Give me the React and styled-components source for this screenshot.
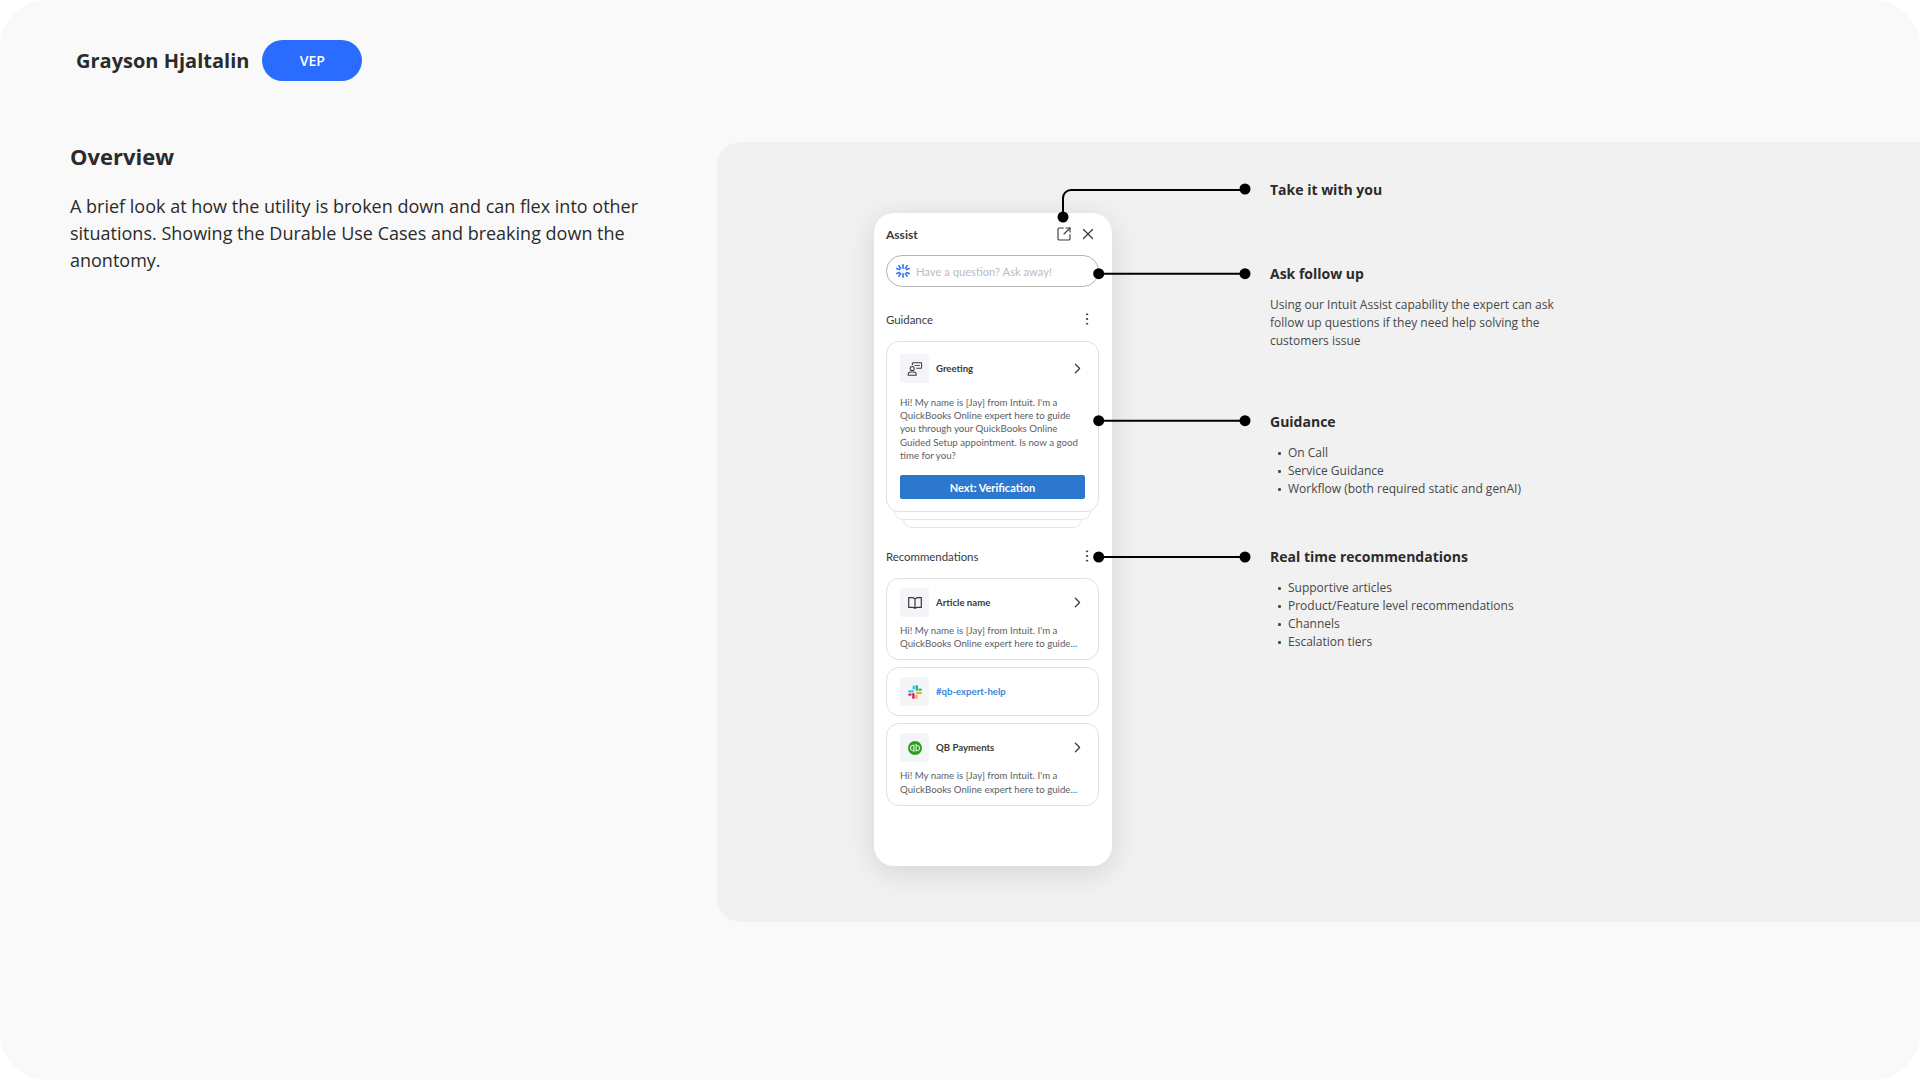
import styled, { createGlobalStyle } from "styled-components";
import { ChevronRight, EllipsisVertical, SquareArrowOutUpRight, X } from "lucide-react";

const GlobalStyle = createGlobalStyle`
  html, body {
    margin: 0;
    padding: 0;
    background-color: #ffffff;
  }
  * {
    box-sizing: border-box;
  }
`;

const Page = styled.div`
  position: relative;
  width: 1920px;
  height: 1080px;
  overflow: hidden;
  background-color: #f9f9f9;
  border-radius: 48px;
  font-family: "Open Sans", sans-serif;
  color: #2b2b2b;
`;

const Header = styled.div`
  display: flex;
  align-items: center;
  gap: 13px;
  height: 41px;
  padding-left: 76px;
  position: absolute;
  top: 40px;
  left: 0;
`;

const Name = styled.h1`
  margin: 0;
  font-size: 20px;
  font-weight: 700;
  line-height: 41px;
`;

const Badge = styled.div`
  display: flex;
  align-items: center;
  justify-content: center;
  width: 100px;
  height: 41px;
  border-radius: 21px;
  background-color: #2a6cff;
  color: white;
  font-size: 14px;
  font-weight: 600;
`;

const Main = styled.div`
  display: flex;
  padding-top: 142px;
`;

const Intro = styled.section`
  width: 717px;
  padding-left: 70px;
`;

const IntroTitle = styled.h2`
  margin: 0 0 22px;
  font-size: 22px;
  font-weight: 700;
  line-height: 29px;
`;

const IntroText = styled.p`
  margin: 0;
  width: 590px;
  font-size: 18px;
  line-height: 27px;
`;

const Panel = styled.section`
  position: relative;
  display: flex;
  align-items: flex-start;
  gap: 158px;
  width: 1203px;
  height: 780px;
  padding-left: 157px;
  background-color: #f1f1f1;
  border-radius: 24px 0 0 24px;
`;

const Phone = styled.div`
  display: flex;
  flex-direction: column;
  flex: none;
  width: 238px;
  height: 653px;
  margin-top: 71px;
  padding: 0 13px 0 12px;
  background-color: white;
  border-radius: 20px;
  box-shadow: 0 6px 30px rgba(0, 0, 0, 0.12);
  font-family: Lato, sans-serif;
  color: #393a3d;
`;

const PhoneHeader = styled.div`
  display: flex;
  align-items: center;
  justify-content: space-between;
  height: 42px;
`;

const PhoneTitle = styled.div`
  font-size: 12px;
  font-weight: 700;
  color: #393a3d;
`;

const HeaderIcons = styled.div`
  display: flex;
  align-items: center;
  gap: 7px;
  padding-right: 2px;
  color: #393a3d;
`;

const AskBox = styled.div`
  display: flex;
  align-items: center;
  gap: 6px;
  height: 32px;
  padding-left: 9px;
  border: 1px solid #b4b4b4;
  border-radius: 16px;
  font-size: 11.2px;
  color: #b9bcc2;
`;

const SectionRow = styled.div`
  display: flex;
  align-items: center;
  justify-content: space-between;
  height: 20px;
  margin-top: ${(p) => p.$top}px;
  padding-right: 4px;
  font-size: 11.4px;
`;

const Dots = styled(EllipsisVertical)`
  fill: currentColor;
`;

const CardStack = styled.div`
  display: flex;
  flex-direction: column;
  align-items: center;
  margin-top: ${(p) => p.$top}px;
`;

const Card = styled.div`
  position: relative;
  width: 213px;
  padding: ${(p) => (p.$tall ? "12px 13px" : "9px 13px")};
  margin-top: ${(p) => p.$top || 0}px;
  background-color: white;
  border: 1px solid #dfe0e3;
  border-radius: 13px;
`;

const StackEdge = styled.div`
  width: ${(p) => p.$width}px;
  height: ${(p) => p.$height}px;
  margin-top: -1px;
  border: 1px solid #e4e5e8;
  border-top: none;
  border-radius: 0 0 12px 12px;
`;

const CardHead = styled.div`
  display: flex;
  align-items: center;
  gap: 7px;
  color: #393a3d;
`;

const IconTile = styled.div`
  display: flex;
  align-items: center;
  justify-content: center;
  flex: none;
  width: 29px;
  height: 29px;
  background-color: #f4f5f8;
  border-radius: 3px;
`;

const CardName = styled.div`
  flex: 1;
  font-size: 9.6px;
  font-weight: 700;
  color: ${(p) => (p.$link ? "#3a86d8" : "#393a3d")};
`;

const Arrow = styled(ChevronRight)`
  margin-right: -0.5px;
`;

const CardText = styled.p`
  margin: ${(p) => p.$top}px 0 0;
  font-size: 9.7px;
  line-height: 13.2px;
  color: #5c5e63;
  white-space: nowrap;
`;

const NextButton = styled.div`
  display: flex;
  align-items: center;
  justify-content: center;
  height: 24px;
  margin-top: 13px;
  background-color: #2d77cf;
  border-radius: 2px;
  color: white;
  font-size: 11px;
  font-weight: 700;
`;

const Notes = styled.div`
  display: flex;
  flex-direction: column;
  width: 310px;
  margin-top: 38px;
`;

const Note = styled.div`
  margin-top: ${(p) => p.$top || 0}px;
`;

const NoteTitle = styled.h3`
  margin: 0;
  font-size: 14px;
  font-weight: 700;
  line-height: 20px;
  color: #2b2b2b;
`;

const NoteText = styled.p`
  margin: 12px 0 0;
  width: 300px;
  font-size: 12px;
  line-height: 18px;
  color: #474747;
`;

const NoteList = styled.ul`
  margin: 12px 0 0;
  padding: 0 0 0 18px;
  list-style: none;
  font-size: 12px;
  line-height: 18px;
  color: #474747;
`;

const NoteItem = styled.li`
  position: relative;
  &::before {
    content: "";
    position: absolute;
    left: -10px;
    top: 8px;
    width: 2.5px;
    height: 2.5px;
    border-radius: 50%;
    background-color: #474747;
  }
`;

const Leaders = styled.svg`
  position: absolute;
  left: 0;
  top: 0;
  pointer-events: none;
`;

const AskSparkle = () => (
  <svg width="14" height="14" viewBox="0 0 14 14" fill="none" stroke="#2b6ff0" strokeWidth="1.6" strokeLinecap="round">
    <path d="M7 .8v3.4M7 9.8v3.4M.8 4.6l2.6.9M13.2 4.6l-2.6.9M.8 9.4l2.6-.9M13.2 9.4l-2.6-.9M3 1.8l1.6 2.6M11 1.8L9.4 4.4M3 12.2l1.6-2.6M11 12.2L9.4 9.6" />
  </svg>
);

const GreetingIcon = () => (
  <svg width="16" height="14" viewBox="0 0 16 15" fill="none" stroke="#393a3d" strokeWidth="1.1">
    <circle cx="5" cy="7" r="2.2" />
    <path d="M.8 14.2v-1.4c0-1.4 1-2.2 2.2-2.2h4c1.2 0 2.2.8 2.2 2.2v1.4z" />
    <path d="M5.2 3.4V1.6c0-.5.3-.9.9-.9h8.1c.5 0 .9.4.9.9v4.2c0 .5-.4.9-.9.9H9.4" />
    <path d="M8 3.7h.8M10 3.7h.8M12 3.7h.8" strokeLinecap="round" />
  </svg>
);

const BookIcon = () => (
  <svg width="14" height="12" viewBox="0 0 14 12" fill="none" stroke="#393a3d" strokeWidth="1.2">
    <path d="M7 2C6 1 5 .7 3.6.7H.7v9.6h3.4c1.2 0 2.2.2 2.9 1 .7-.8 1.7-1 2.9-1h3.4V.7h-2.9C9 .7 8 1 7 2zM7 2v9.3" />
  </svg>
);

const SlackIcon = () => (
  <svg width="14" height="14" viewBox="0 0 14 14">
    <rect x="0" y="5.2" width="6" height="2.4" rx="1.2" fill="#36c5f0" />
    <rect x="4.6" y="0.4" width="2.4" height="4" rx="1.2" fill="#36c5f0" />
    <rect x="7.6" y="0" width="2.4" height="6" rx="1.2" fill="#2eb67d" />
    <rect x="10.4" y="3.4" width="3.4" height="2.4" rx="1.2" fill="#2eb67d" />
    <rect x="8" y="6.8" width="6" height="2.4" rx="1.2" fill="#ecb22e" />
    <rect x="7.2" y="9.8" width="2.4" height="4" rx="1.2" fill="#ecb22e" />
    <rect x="4.2" y="8" width="2.4" height="6" rx="1.2" fill="#e01e5a" />
    <rect x="0.2" y="8.4" width="3.4" height="2.4" rx="1.2" fill="#e01e5a" />
  </svg>
);

const PaymentsIcon = () => (
  <svg width="14" height="14" viewBox="0 0 14 14" fill="none">
    <circle cx="7" cy="7" r="7" fill="#2ca01c" />
    <path d="M5.9 3.6v7.4M5.9 4.5H4.7a2.3 2.3 0 0 0 0 4.8h.6M8.1 10.4V3M8.1 9.5h1.2a2.3 2.3 0 0 0 0-4.8h-.6" stroke="white" strokeWidth="1" />
  </svg>
);

const leaderRows = [131.7, 278.7, 415];

const App = () => {
  return (
    <>
      <GlobalStyle />
      <Page>
        <Header>
          <Name>Grayson Hjaltalin</Name>
          <Badge>VEP</Badge>
        </Header>
        <Main>
          <Intro>
            <IntroTitle>Overview</IntroTitle>
            <IntroText>
              A brief look at how the utility is broken down and can flex into other situations. Showing the Durable Use
              Cases and breaking down the anontomy.
            </IntroText>
          </Intro>
          <Panel>
            <Phone>
              <PhoneHeader>
                <PhoneTitle>Assist</PhoneTitle>
                <HeaderIcons>
                  <SquareArrowOutUpRight size={16} strokeWidth={1.7} />
                  <X size={18} strokeWidth={1.6} />
                </HeaderIcons>
              </PhoneHeader>
              <AskBox>
                <AskSparkle />
                Have a question? Ask away!
              </AskBox>
              <SectionRow $top={22}>
                Guidance
                <Dots size={16} strokeWidth={1.2} />
              </SectionRow>
              <CardStack $top={12}>
                <Card $tall>
                  <CardHead>
                    <IconTile>
                      <GreetingIcon />
                    </IconTile>
                    <CardName>Greeting</CardName>
                    <Arrow size={17} strokeWidth={1.7} />
                  </CardHead>
                  <CardText $top={13}>
                    Hi! My name is [Jay] from Intuit. I'm a
                    <br />
                    QuickBooks Online expert here to guide
                    <br />
                    you through your QuickBooks Online
                    <br />
                    Guided Setup appointment. Is now a good
                    <br />
                    time for you?
                  </CardText>
                  <NextButton>Next: Verification</NextButton>
                </Card>
                <StackEdge $width={197} $height={9} />
                <StackEdge $width={179} $height={9} />
              </CardStack>
              <SectionRow $top={18}>
                Recommendations
                <Dots size={16} strokeWidth={1.2} />
              </SectionRow>
              <CardStack $top={12}>
                <Card>
                  <CardHead>
                    <IconTile>
                      <BookIcon />
                    </IconTile>
                    <CardName>Article name</CardName>
                    <Arrow size={17} strokeWidth={1.7} />
                  </CardHead>
                  <CardText $top={7}>
                    Hi! My name is [Jay] from Intuit. I'm a
                    <br />
                    QuickBooks Online expert here to guide...
                  </CardText>
                </Card>
                <Card $top={7}>
                  <CardHead>
                    <IconTile>
                      <SlackIcon />
                    </IconTile>
                    <CardName $link>#qb-expert-help</CardName>
                  </CardHead>
                </Card>
                <Card $top={7}>
                  <CardHead>
                    <IconTile>
                      <PaymentsIcon />
                    </IconTile>
                    <CardName>QB Payments</CardName>
                    <Arrow size={17} strokeWidth={1.7} />
                  </CardHead>
                  <CardText $top={7}>
                    Hi! My name is [Jay] from Intuit. I'm a
                    <br />
                    QuickBooks Online expert here to guide...
                  </CardText>
                </Card>
              </CardStack>
            </Phone>
            <Notes>
              <Note>
                <NoteTitle>Take it with you</NoteTitle>
              </Note>
              <Note $top={64}>
                <NoteTitle>Ask follow up</NoteTitle>
                <NoteText>
                  Using our Intuit Assist capability the expert can ask follow up questions if they need help solving the
                  customers issue
                </NoteText>
              </Note>
              <Note $top={62}>
                <NoteTitle>Guidance</NoteTitle>
                <NoteList>
                  <NoteItem>On Call</NoteItem>
                  <NoteItem>Service Guidance</NoteItem>
                  <NoteItem>Workflow (both required static and genAI)</NoteItem>
                </NoteList>
              </Note>
              <Note $top={49}>
                <NoteTitle>Real time recommendations</NoteTitle>
                <NoteList>
                  <NoteItem>Supportive articles</NoteItem>
                  <NoteItem>Product/Feature level recommendations</NoteItem>
                  <NoteItem>Channels</NoteItem>
                  <NoteItem>Escalation tiers</NoteItem>
                </NoteList>
              </Note>
            </Notes>
            <Leaders width="560" height="440" viewBox="0 0 560 440">
              <g fill="none" stroke="#000" strokeWidth="2">
                <path d="M346 75V56a8 8 0 0 1 8-8H528" />
                {leaderRows.map((y) => (
                  <path key={y} d={`M381.7 ${y}H528`} />
                ))}
              </g>
              <g fill="#000">
                <circle cx="346" cy="75" r="5.5" />
                <circle cx="528" cy="47" r="5.5" />
                {leaderRows.map((y) => (
                  <g key={y}>
                    <circle cx="381.7" cy={y} r="5.5" />
                    <circle cx="528" cy={y} r="5.5" />
                  </g>
                ))}
              </g>
            </Leaders>
          </Panel>
        </Main>
      </Page>
    </>
  );
};

export default App;
